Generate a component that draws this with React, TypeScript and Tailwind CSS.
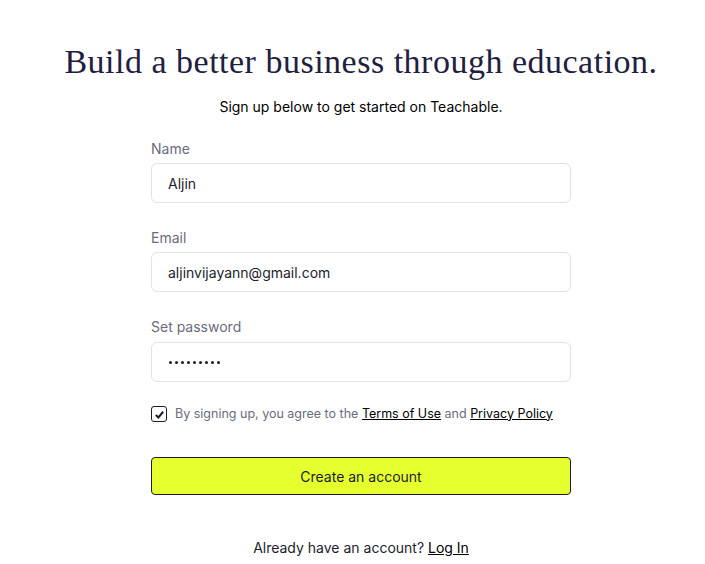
import React from "react";

export default function App() {
  return (
    <div className="min-h-screen bg-white flex flex-col items-center pl-[17px]" style={{ fontFamily: "Inter, 'Liberation Sans', sans-serif" }}>
      <h1 className="mt-[42px] h-[40px] leading-[40px] text-[34px] tracking-[0.5px] text-[#1f2040] text-center whitespace-nowrap" style={{ fontFamily: "'Liberation Serif', 'DejaVu Serif', serif" }}>
        Build a better business through education.
      </h1>
      <p className="mt-[15px] h-[20px] leading-[20px] text-[14px] text-black text-center">
        Sign up below to get started on Teachable.
      </p>
      <form className="mt-[22px] w-[420px] flex flex-col">
        <label className="text-[14px] leading-[20px] text-[#6b6b7e]">Name</label>
        <div className="mt-[4px] h-[40px] rounded-[6px] border border-[#e1e1e8] flex items-center px-[16px] text-[14px] text-[#1c1c2e]">Aljin</div>
        <label className="mt-[25px] text-[14px] leading-[20px] text-[#6b6b7e]">Email</label>
        <div className="mt-[4px] h-[40px] rounded-[6px] border border-[#e1e1e8] flex items-center px-[16px] text-[14px] text-[#1c1c2e]">aljinvijayann@gmail.com</div>
        <label className="mt-[25px] text-[14px] leading-[20px] text-[#6b6b7e]">Set password</label>
        <div className="mt-[5px] h-[40px] rounded-[6px] border border-[#e1e1e8] flex items-center gap-[3px] px-[17px]">
          {[0, 1, 2, 3, 4, 5, 6, 7, 8].map((i) => (
            <span key={i} className="w-[3px] h-[3px] rounded-full bg-[#1c1c2e]" />
          ))}
        </div>
        <div className="mt-[24px] flex items-center gap-[8px] h-[16px]">
          <span className="w-[16px] h-[16px] rounded-[3px] border border-[#1c1c2e] flex items-center justify-center">
            <svg width="11" height="11" viewBox="0 0 12 12"><path d="M2 6.5 L4.8 9.2 L10 3" fill="none" stroke="#1c1c2e" strokeWidth="2.2" /></svg>
          </span>
          <span className="text-[12.5px] text-[#6b6b7e]">
            By signing up, you agree to the <span className="text-black underline">Terms of Use</span> and <span className="text-black underline">Privacy Policy</span>
          </span>
        </div>
        <button type="button" className="mt-[35px] h-[38px] rounded-[4px] border border-[#1c1c2e] bg-[#e6ff2e] text-[14px] text-[#1c1c2e]">
          Create an account
        </button>
      </form>
      <p className="mt-[43px] text-[14px] leading-[20px] text-[#1c1c2e]">
        Already have an account? <span className="text-black underline">Log In</span>
      </p>
    </div>
  );
}
